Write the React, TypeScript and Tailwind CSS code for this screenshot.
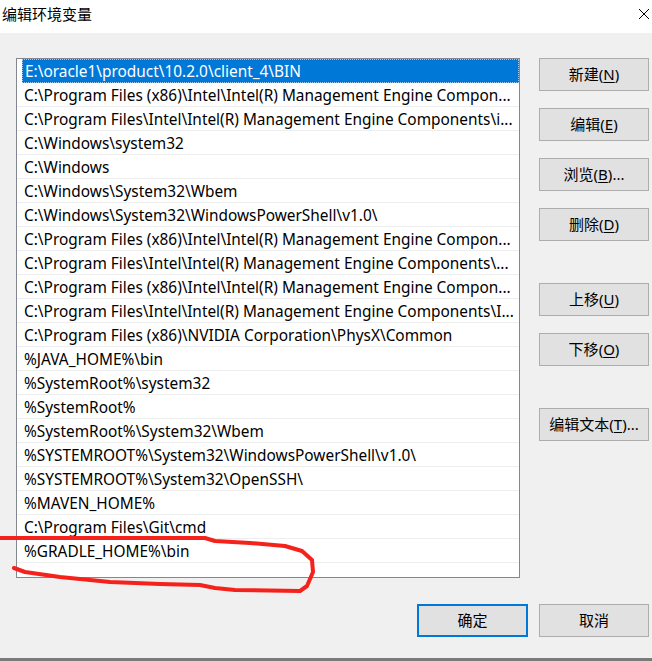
import type { ReactNode } from 'react';

const paths = [
  'E:\\oracle1\\product\\10.2.0\\client_4\\BIN',
  'C:\\Program Files (x86)\\Intel\\Intel(R) Management Engine Compon...',
  'C:\\Program Files\\Intel\\Intel(R) Management Engine Components\\i...',
  'C:\\Windows\\system32',
  'C:\\Windows',
  'C:\\Windows\\System32\\Wbem',
  'C:\\Windows\\System32\\WindowsPowerShell\\v1.0\\',
  'C:\\Program Files (x86)\\Intel\\Intel(R) Management Engine Compon...',
  'C:\\Program Files\\Intel\\Intel(R) Management Engine Components\\...',
  'C:\\Program Files (x86)\\Intel\\Intel(R) Management Engine Compon...',
  'C:\\Program Files\\Intel\\Intel(R) Management Engine Components\\I...',
  'C:\\Program Files (x86)\\NVIDIA Corporation\\PhysX\\Common',
  '%JAVA_HOME%\\bin',
  '%SystemRoot%\\system32',
  '%SystemRoot%',
  '%SystemRoot%\\System32\\Wbem',
  '%SYSTEMROOT%\\System32\\WindowsPowerShell\\v1.0\\',
  '%SYSTEMROOT%\\System32\\OpenSSH\\',
  '%MAVEN_HOME%',
  'C:\\Program Files\\Git\\cmd',
  '%GRADLE_HOME%\\bin',
];

function WinButton({ children, primary, className = '' }: { children: ReactNode; primary?: boolean; className?: string }) {
  return (
    <button
      className={`w-[110px] h-[33px] flex items-center justify-center bg-[#e1e1e1] text-[15px] text-black ${
        primary ? 'border-2 border-[#0078d7]' : 'border border-[#adadad]'
      } ${className}`}
    >
      {children}
    </button>
  );
}

function Key({ k }: { k: string }) {
  return (
    <>
      (<span className="underline underline-offset-2">{k}</span>)
    </>
  );
}

export default function App() {
  return (
    <div
      className="relative w-[652px] h-[661px] bg-[#f0f0f0] flex flex-col overflow-hidden"
      style={{ fontFamily: '"Noto Sans", "Noto Sans CJK SC", sans-serif' }}
    >
      {/* title bar */}
      <div className="h-[33px] bg-white flex items-start justify-between shrink-0">
        <span className="pl-[2px] pt-[3px] text-[15px] leading-[22px] text-black" style={{ fontFamily: '"Noto Sans CJK SC", sans-serif' }}>
          编辑环境变量
        </span>
        <svg width="12" height="12" viewBox="0 0 12 12" className="mt-[8px] mr-[2px]">
          <path d="M1 1 L11 11 M11 1 L1 11" stroke="#000" strokeWidth="1" />
        </svg>
      </div>

      <div className="flex pl-[16px] pt-[25px]">
        {/* list */}
        <div className="w-[504px] h-[520px] border border-[#828790] bg-white overflow-hidden">
          {paths.map((p, i) =>
            i === 0 ? (
              <div key={i} className="h-[24px] ml-[5px] bg-[#0078d7] text-white flex items-center pl-[3px] pt-[2px] outline outline-1 outline-dotted outline-offset-[-1px] outline-[#9cc7ef]">
                <span className="text-[15.4px] whitespace-nowrap">{p}</span>
              </div>
            ) : (
              <div key={i} className="h-[24px] border-b border-[#eeeeee] flex items-center pl-[7px] pt-[2px] text-black">
                <span className="text-[15.4px] whitespace-nowrap">{p}</span>
              </div>
            )
          )}
        </div>

        {/* right buttons */}
        <div className="ml-[19px] flex flex-col">
          <WinButton>
            新建<Key k="N" />
          </WinButton>
          <WinButton className="mt-[17px]">
            编辑<Key k="E" />
          </WinButton>
          <WinButton className="mt-[17px]">
            浏览<Key k="B" />...
          </WinButton>
          <WinButton className="mt-[17px]">
            删除<Key k="D" />
          </WinButton>
          <WinButton className="mt-[42px]">
            上移<Key k="U" />
          </WinButton>
          <WinButton className="mt-[17px]">
            下移<Key k="O" />
          </WinButton>
          <WinButton className="mt-[42px]">
            编辑文本<Key k="T" />...
          </WinButton>
        </div>
      </div>

      {/* bottom buttons */}
      <div className="flex justify-end gap-[11px] pr-[3px] mt-[26px]">
        <WinButton primary className="w-[111px] h-[32px]">
          确定
        </WinButton>
        <WinButton className="h-[32px]">取消</WinButton>
      </div>

      <div className="mt-auto h-[3px] bg-[#7a7a7a] shrink-0" />

      {/* red annotation */}
      <svg className="absolute inset-0 pointer-events-none" width="652" height="661" viewBox="0 0 652 661">
        <path
          d="M14 568 L25 572 L60 577 L110 582 L160 584 L200 585 L215 588 L235 590 L300 591 L307 586 L313 572 L312 560 L302 551 L285 546 L250 543 L215 541 L205 538 L150 538 L60 538 L0 538"
          fill="none"
          stroke="#f5211b"
          strokeWidth="4"
          strokeLinejoin="round"
          strokeLinecap="round"
        />
      </svg>
    </div>
  );
}
